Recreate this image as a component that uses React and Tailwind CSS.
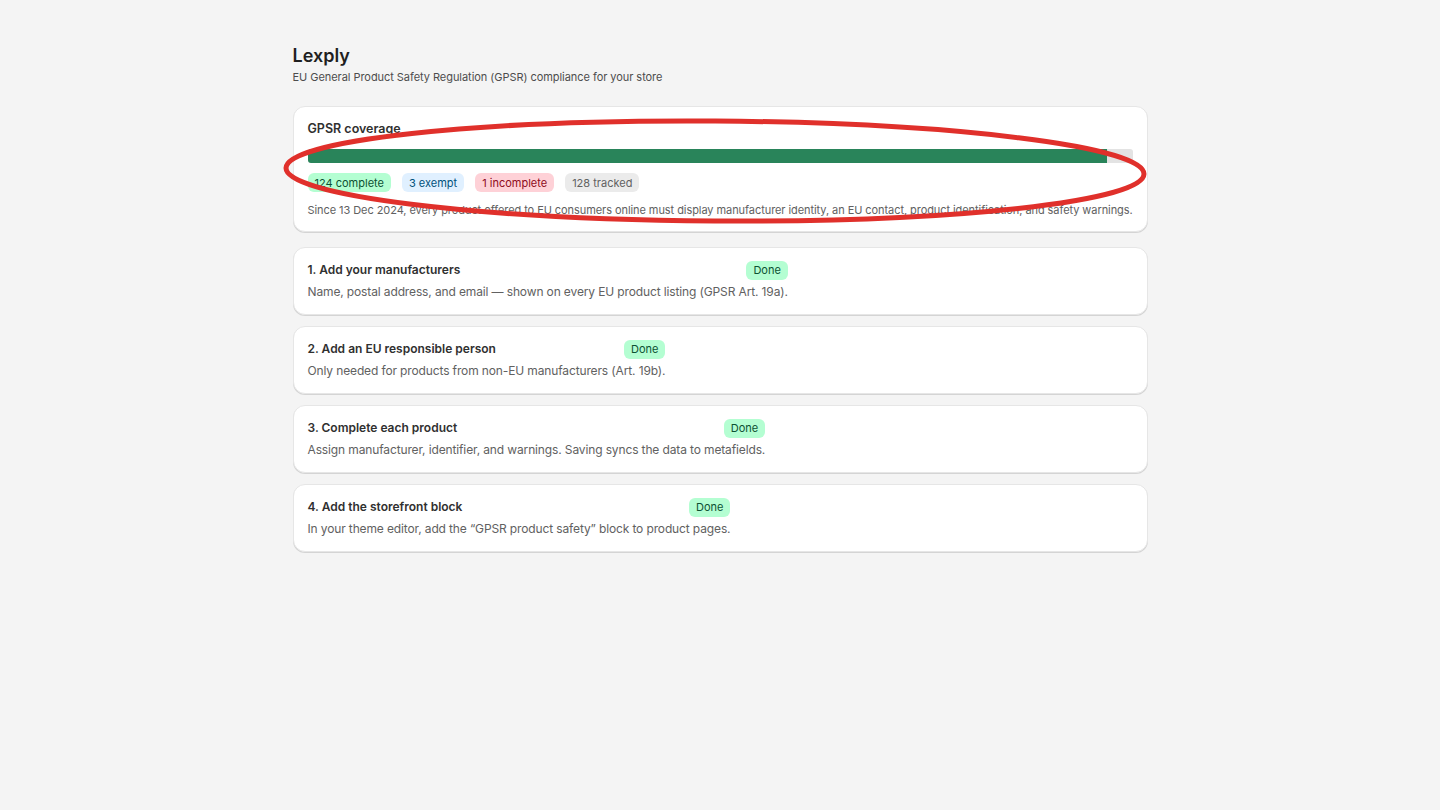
import React from 'react';

const STEPS = [
  { title: '1. Add your manufacturers', desc: 'Name, postal address, and email — shown on every EU product listing (GPSR Art. 19a).' },
  { title: '2. Add an EU responsible person', desc: 'Only needed for products from non-EU manufacturers (Art. 19b).' },
  { title: '3. Complete each product', desc: 'Assign manufacturer, identifier, and warnings. Saving syncs the data to metafields.' },
  { title: '4. Add the storefront block', desc: 'In your theme editor, add the “GPSR product safety” block to product pages.' },
];

const STATS = { complete: 124, exempt: 3, incomplete: 1, tracked: 128 };

function Badge({ className, children }) {
  return (
    <span className={`inline-flex items-center h-[19px] px-[7px] rounded-md text-[11px] leading-4 ${className}`}>
      {children}
    </span>
  );
}

function Card({ className = '', children }) {
  return (
    <div className={`bg-white rounded-xl border border-[#e6e6e6] shadow-[0_1px_0_0_rgba(0,0,0,0.13)] ${className}`}>
      {children}
    </div>
  );
}

export default function App() {
  const pct = (STATS.complete / STATS.tracked) * 100;

  return (
    <div className="min-h-[810px] bg-[#f4f4f4] text-[#303030] font-['Inter',sans-serif] relative">
      <div className="w-[855px] mx-auto pt-[44px]">
        <h1 className="text-[18px] leading-6 font-semibold text-[#1f1f1f]">Lexply</h1>
        <p className="text-[11px] leading-4 text-[#4d4d4d] mt-px tracking-[-0.05px]">
          EU General Product Safety Regulation (GPSR) compliance for your store
        </p>

        <Card className="mt-[21px] px-[14px] pt-3 pb-[11px]">
          <h2 className="text-[12.5px] leading-5 font-semibold">GPSR coverage</h2>
          <div className="mt-[10px] h-[14px] rounded-[3px] bg-[#e3e3e3] overflow-hidden">
            <div className="h-full bg-[#29845a]" style={{ width: `${pct}%` }} />
          </div>
          <div className="flex gap-[11px] mt-[10px]">
            <Badge className="bg-[#b4fed2] text-[#0c5132]">{STATS.complete} complete</Badge>
            <Badge className="bg-[#e0f0ff] text-[#00527c]">{STATS.exempt} exempt</Badge>
            <Badge className="bg-[#fed1d7] text-[#8e0b21]">{STATS.incomplete} incomplete</Badge>
            <Badge className="bg-[#ebebeb] text-[#616161]">{STATS.tracked} tracked</Badge>
          </div>
          <p className="mt-2 text-[11px] leading-5 text-[#616161] tracking-[-0.07px] whitespace-nowrap">
            Since 13 Dec 2024, every product offered to EU consumers online must display manufacturer identity, an EU contact, product identification, and safety warnings.
          </p>
        </Card>

        <div className="flex flex-col gap-[11px] mt-[15px]">
          {STEPS.map((s) => (
            <Card key={s.title} className="px-[14px] pt-3 pb-3">
              <div className="w-fit">
                <div className="flex items-center justify-between">
                  <h3 className="text-xs leading-5 font-semibold">{s.title}</h3>
                  <Badge className="bg-[#b4fed2] text-[#0c5132]">Done</Badge>
                </div>
                <p className="mt-0.5 text-xs leading-5 text-[#616161] tracking-[-0.13px]">{s.desc}</p>
              </div>
            </Card>
          ))}
        </div>
      </div>

      <svg className="absolute left-0 top-0 pointer-events-none" width="1440" height="810">
        <ellipse cx="715" cy="171" rx="429" ry="50" fill="none" stroke="#e0302b" strokeWidth="5" transform="rotate(0.4 715 171)" />
      </svg>
    </div>
  );
}
